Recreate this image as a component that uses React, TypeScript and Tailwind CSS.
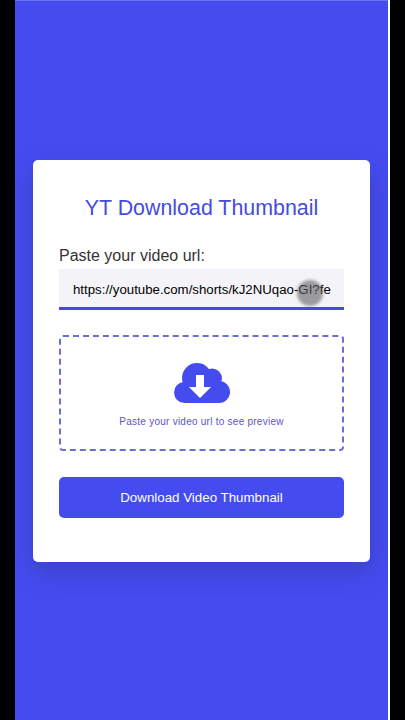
export default function App() {
  return (
    <div className="flex h-[720px] w-[405px] overflow-hidden bg-black font-['Liberation_Sans',Arial,sans-serif]">
      <div className="w-[15px] shrink-0" />
      <main className="flex w-[373px] shrink-0 flex-col border-t border-[#6a72f0] bg-[#444cf0] pl-[18px] pr-[18px] pt-[159px]">
        <section className="h-[402px] w-[337px] rounded-[5px] bg-white px-[26px] pt-[34px] shadow-[0_10px_24px_rgba(50,50,150,0.45)]">
          <h1 className="text-center text-[21.4px] leading-[28px] text-[#444cdc]">YT Download Thumbnail</h1>

          <label className="mt-[24px] block text-[16px] leading-[20px] text-[#333333]">Paste your video url:</label>
          <div className="relative mt-[3px] w-[285px]">
            <input
              readOnly
              value="https://youtube.com/shorts/kJ2NUqao-GI?feature=share"
              className="block h-[41px] w-full border-b-[3px] border-[#444cdc] bg-[#f3f3f8] pl-[14px] pr-[13px] pt-[2px] text-[13.25px] text-black outline-none"
            />
            {/* touch indicator from the screen recording */}
            <div className="absolute left-[238px] top-[11px] h-[26px] w-[26px] rounded-full bg-[#606060]/60 blur-[1.5px]" />
          </div>

          <div className="mt-[25px] flex h-[116px] w-[285px] flex-col items-center rounded-[4px] border-2 border-dashed border-[#6c6ed4] pt-[26px]">
            <svg width="56" height="40" viewBox="0 0 56 40" aria-hidden="true">
              <g fill="#444cf0">
                <circle cx="23" cy="15" r="15" />
                <circle cx="38" cy="15.500" r="10" />
                <circle cx="10.500" cy="29.500" r="10.500" />
                <circle cx="45" cy="29" r="11" />
                <rect x="10" y="20" width="35" height="20" />
              </g>
              <path d="M22 12h8v12h7L26 35 15 24h7z" fill="#ffffff" />
            </svg>
            <p className="mt-[12px] text-[10px] leading-[14px] tracking-[0.25px] text-[#5a54cc]">Paste your video url to see preview</p>
          </div>

          <button className="mt-[26px] h-[41px] w-[285px] rounded-[5px] bg-[#444cf0] text-[13.33px] text-white">Download Video Thumbnail</button>
        </section>
      </main>
      <div className="w-[2px] shrink-0 bg-white" />
      <div className="flex-1" />
    </div>
  )
}
